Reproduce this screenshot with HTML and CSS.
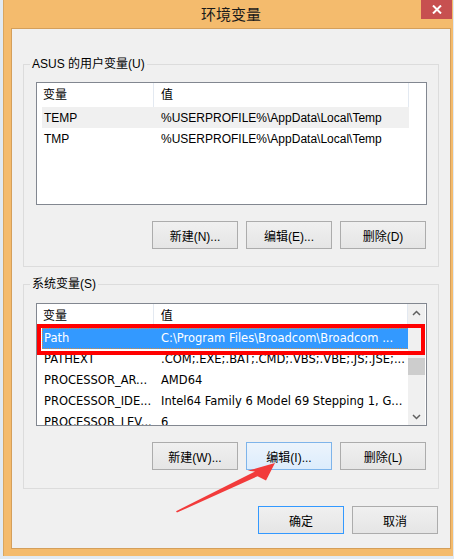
FILE: index.html
```html
<html lang="zh-CN">
<head>
    <meta charset="UTF-8">
    <title>环境变量</title>
    <link rel="stylesheet" href="styles.css">
</head>
<body>
    <div class="window">
        <div class="titlebar">
            <span class="title">环境变量</span>
            <button class="close" type="button">
                <svg width="10" height="9" viewBox="0 0 10 9">
                    <path d="M1 0.5 L9 8.5 M9 0.5 L1 8.5" stroke="#fff" stroke-width="2"/>
                </svg>
            </button>
        </div>

        <div class="client">
            <fieldset class="group group-user">
                <legend>ASUS 的用户变量(U)</legend>
                <div class="listview">
                    <div class="lv-main">
                        <div class="lv-head">
                            <span class="hd-name">变量</span>
                            <span class="hd-value">值</span>
                        </div>
                        <div class="lv-row inactive">
                            <span class="c-name">TEMP</span>
                            <span class="c-value">%USERPROFILE%\AppData\Local\Temp</span>
                        </div>
                        <div class="lv-row">
                            <span class="c-name">TMP</span>
                            <span class="c-value">%USERPROFILE%\AppData\Local\Temp</span>
                        </div>
                    </div>
                </div>
                <div class="btn-row">
                    <button class="btn" type="button">新建(N)...</button>
                    <button class="btn" type="button">编辑(E)...</button>
                    <button class="btn" type="button">删除(D)</button>
                </div>
            </fieldset>

            <fieldset class="group group-system">
                <legend>系统变量(S)</legend>
                <div class="listview system-list">
                    <div class="lv-main">
                        <div class="lv-head">
                            <span class="hd-name">变量</span>
                            <span class="hd-value">值</span>
                        </div>
                        <div class="lv-row selected">
                            <span class="c-name">Path</span>
                            <span class="c-value">C:\Program Files\Broadcom\Broadcom ...</span>
                        </div>
                        <div class="lv-row">
                            <span class="c-name">PATHEXT</span>
                            <span class="c-value">.COM;.EXE;.BAT;.CMD;.VBS;.VBE;.JS;.JSE;...</span>
                        </div>
                        <div class="lv-row">
                            <span class="c-name">PROCESSOR_AR...</span>
                            <span class="c-value">AMD64</span>
                        </div>
                        <div class="lv-row">
                            <span class="c-name">PROCESSOR_IDE...</span>
                            <span class="c-value">Intel64 Family 6 Model 69 Stepping 1, G...</span>
                        </div>
                        <div class="lv-row">
                            <span class="c-name">PROCESSOR_LEV...</span>
                            <span class="c-value">6</span>
                        </div>
                    </div>
                    <div class="scrollbar">
                        <div class="sb-arrow">
                            <svg width="9" height="6" viewBox="0 0 9 6">
                                <path d="M1 5 L4.5 1.5 L8 5" fill="none" stroke="#606060" stroke-width="1.5"/>
                            </svg>
                        </div>
                        <div class="sb-track">
                            <div class="sb-thumb"></div>
                        </div>
                        <div class="sb-arrow">
                            <svg width="9" height="6" viewBox="0 0 9 6">
                                <path d="M1 1 L4.5 4.5 L8 1" fill="none" stroke="#606060" stroke-width="1.5"/>
                            </svg>
                        </div>
                    </div>
                    <div class="mark-box"></div>
                </div>
                <div class="btn-row">
                    <button class="btn" type="button">新建(W)...</button>
                    <button class="btn hover" type="button">编辑(I)...</button>
                    <button class="btn" type="button">删除(L)</button>
                </div>
            </fieldset>

            <div class="dialog-buttons">
                <button class="btn default" type="button">确定</button>
                <button class="btn" type="button">取消</button>
            </div>
        </div>
    </div>

    <svg class="mark-arrow" width="454" height="559" viewBox="0 0 454 559">
        <polygon points="176,511.2 255,471.6 247.5,470.8 275,463 266,480.6 257.6,476.2 177,512.6" fill="#f23b3b"/>
    </svg>
</body>
</html>
```

FILE: styles.css
```css
html, body {
    margin: 0;
    padding: 0;
}

body {
    width: 454px;
    height: 559px;
    background-color: #e2eaf2;
    font-family: "Liberation Sans", "Noto Sans CJK SC", sans-serif;
    font-size: 12px;
    color: #000;
    position: relative;
    overflow: hidden;
}

.window {
    margin-left: 3px;
    width: 450px;
    height: 556px;
    box-sizing: border-box;
    padding: 0 2px 7px 7px;
    background-color: #f4bb6d;
    border-left: 1px solid #d9a660;
    display: flex;
    flex-direction: column;
}

.titlebar {
    height: 28px;
    margin-left: -1px;
    margin-right: -1px;
    display: grid;
}

.title,
.close {
    grid-area: 1 / 1;
}

.title {
    text-align: center;
    line-height: 29px;
    font-size: 15px;
    color: #1a1a1a;
}

.close {
    justify-self: end;
    align-self: start;
    width: 31px;
    height: 19px;
    padding: 0;
    border: none;
    background-color: #c75050;
    display: flex;
    align-items: center;
    justify-content: center;
}

.client {
    flex: 1;
    background-color: #f0f0f0;
    border: 1px solid #d49f5b;
    display: flex;
    flex-direction: column;
}

.group {
    margin: 0 11px;
    border: 1px solid #dcdcdc;
    padding: 11px 11px 17px 12px;
    min-width: 0;
}

.group legend {
    padding: 0 2px;
    margin-left: -6px;
    line-height: 14px;
    font-size: 12px;
}

.group-user {
    margin-top: 28px;
}

.group-system {
    margin-top: 10px;
    padding-top: 12px;
    padding-bottom: 18px;
}

.listview {
    height: 123px;
    box-sizing: border-box;
    border: 1px solid #828790;
    background-color: #fff;
    display: flex;
    position: relative;
}

.lv-main {
    flex: 1;
    overflow: hidden;
}

.lv-head {
    height: 24px;
    display: flex;
    line-height: 24px;
}

.hd-name,
.hd-value {
    box-sizing: border-box;
    border-right: 1px solid #e3e9f1;
}

.hd-name {
    width: 117px;
    padding-left: 6px;
}

.hd-value {
    width: 255px;
    padding-left: 7px;
}

.lv-row {
    margin-left: 5px;
    width: 367px;
    height: 21px;
    line-height: 22px;
    display: flex;
    white-space: nowrap;
    overflow: hidden;
}

.c-name {
    flex-shrink: 0;
    width: 112px;
    padding-left: 2px;
    box-sizing: border-box;
    overflow: hidden;
}

.c-value {
    padding-left: 7px;
}

.lv-row.inactive {
    background-color: #f0f0f0;
}

.system-list .lv-row {
    font-family: "DejaVu Sans", sans-serif;
    font-size: 11.5px;
    line-height: 21px;
}

.lv-row.selected {
    background-color: #3399ff;
    color: #fff;
    outline: 1px dotted #d98c3f;
    outline-offset: -1px;
}

.scrollbar {
    width: 17px;
    margin-right: 1px;
    background-color: #f0f0f0;
    display: flex;
    flex-direction: column;
}

.sb-arrow {
    height: 17px;
    display: flex;
    align-items: center;
    justify-content: center;
}

.sb-track {
    flex: 1;
    padding-top: 37px;
}

.sb-thumb {
    height: 17px;
    background-color: #cdcdcd;
}

.mark-box {
    position: absolute;
    left: 0;
    top: 20px;
    width: 388px;
    height: 31px;
    box-sizing: border-box;
    border: 4px solid #f00;
}

.btn-row {
    margin-top: 16px;
    padding-right: 1px;
    display: flex;
    justify-content: flex-end;
    gap: 8px;
}

.btn {
    width: 86px;
    height: 28px;
    border: 1px solid #acacac;
    background: linear-gradient(#f0f0f0, #e5e5e5);
    font-family: "Liberation Sans", "Noto Sans CJK SC", sans-serif;
    font-size: 12px;
    color: #000;
    padding: 0;
}

.btn.hover {
    border-color: #7eb4ea;
    background: linear-gradient(#ecf4fc, #dcecfc);
}

.btn.default {
    border-color: #3399ff;
}

.dialog-buttons {
    margin: 17px 12px 0 0;
    display: flex;
    justify-content: flex-end;
    gap: 8px;
}

.mark-arrow {
    position: absolute;
    left: 0;
    top: 0;
    pointer-events: none;
}
```
